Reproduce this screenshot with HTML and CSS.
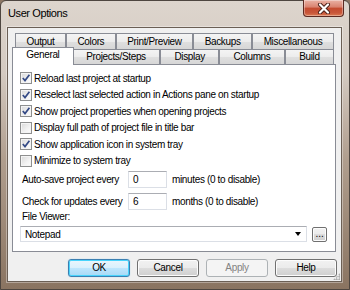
FILE: index.html
```html
<!DOCTYPE html>
<html lang="en">
<head>
    <meta charset="UTF-8">
    <title>User Options</title>
    <link rel="stylesheet" href="styles.css">
</head>
<body>

    <div class="window">
        <div class="titlebar">
            <span class="title">User Options</span>
            <div class="close">
                <svg width="14" height="11" viewBox="0 0 14 11">
                    <path d="M3 1.5 L11 9.5 M11 1.5 L3 9.5" stroke="#4a2018" stroke-width="4" stroke-linecap="round"/>
                    <path d="M3 1.5 L11 9.5 M11 1.5 L3 9.5" stroke="#fff" stroke-width="2.2" stroke-linecap="round"/>
                </svg>
            </div>
        </div>

        <div class="client">
            <div class="tabs">
                <div class="tab-row back">
                    <div class="tab">Output</div>
                    <div class="tab">Colors</div>
                    <div class="tab">Print/Preview</div>
                    <div class="tab">Backups</div>
                    <div class="tab">Miscellaneous</div>
                </div>
                <div class="tab-row front">
                    <div class="tab selected">General</div>
                    <div class="tab">Projects/Steps</div>
                    <div class="tab">Display</div>
                    <div class="tab">Columns</div>
                    <div class="tab">Build</div>
                </div>
            </div>

            <div class="panel">
                <div class="check"><span class="box checked"></span>Reload last project at startup</div>
                <div class="check"><span class="box checked"></span>Reselect last selected action in Actions pane on startup</div>
                <div class="check"><span class="box checked"></span>Show project properties when opening projects</div>
                <div class="check"><span class="box"></span>Display full path of project file in title bar</div>
                <div class="check"><span class="box checked"></span>Show application icon in system tray</div>
                <div class="check"><span class="box"></span>Minimize to system tray</div>

                <div class="field first">
                    <span class="field-label">Auto-save project every</span>
                    <div class="textbox">0</div>
                    <span class="unit">minutes (0 to disable)</span>
                </div>
                <div class="field">
                    <span class="field-label">Check for updates every</span>
                    <div class="textbox">6</div>
                    <span class="unit">months (0 to disable)</span>
                </div>

                <div class="viewer-label">File Viewer:</div>
                <div class="viewer-row">
                    <div class="combo">
                        <span>Notepad</span>
                        <span class="arrow"></span>
                    </div>
                    <div class="browse">...</div>
                </div>
            </div>

            <div class="buttons">
                <div class="btn default">OK</div>
                <div class="btn">Cancel</div>
                <div class="btn disabled">Apply</div>
                <div class="btn">Help</div>
            </div>

            <div class="grip"></div>
        </div>
    </div>

</body>
</html>
```

FILE: styles.css
```css
* {
    box-sizing: border-box;
}

body {
    margin: 0;
    font-family: "Liberation Sans", Arial, sans-serif;
    font-size: 10px;
    letter-spacing: -0.35px;
    color: #000;
    background-color: #8c7664;
}

.window {
    width: 350px;
    height: 290px;
    border: 1px solid #4e4640;
    border-radius: 6px 6px 0 0;
    background: linear-gradient(to bottom, #ddd5cd 0%, #d4cac1 25%, #b09e8e 55%, #8a7461 100%);
    padding: 0 7px 7px 6px;
    display: flex;
    flex-direction: column;
}

.titlebar {
    height: 26px;
    display: flex;
    justify-content: space-between;
    align-items: flex-start;
}

.title {
    font-size: 11px;
    letter-spacing: -0.4px;
    padding: 6px 0 0 1px;
}

.close {
    width: 41px;
    height: 17px;
    margin: -1px -2px 0 0;
    border: 1px solid #5c2a22;
    border-top: none;
    border-radius: 0 0 4px 4px;
    background: linear-gradient(to bottom, #eab2a4 0%, #d9826e 45%, #c44b2f 50%, #c8563a 80%, #dc7a52 100%);
    box-shadow: inset 0 0 0 1px rgba(255, 255, 255, 0.35);
    display: flex;
    align-items: center;
    justify-content: center;
}

.client {
    flex: 1;
    position: relative;
    background-color: #f0f0f0;
    border: 1px solid #6b5f55;
    box-shadow: 0 0 0 1px rgba(255, 255, 255, 0.35);
    padding: 5px 5px 4px 4px;
    display: flex;
    flex-direction: column;
}

.tabs {
    padding: 0 2px;
}

.tab-row {
    display: flex;
}

.tab-row.back {
    height: 16px;
    padding-left: 1px;
}

.tab-row.front {
    height: 15px;
}

.tab {
    flex: 1 1 auto;
    padding: 0 5px;
    text-align: center;
    white-space: nowrap;
    border: 1px solid #898c95;
    border-bottom: none;
    background: linear-gradient(to bottom, #f4f4f4 0%, #ececec 50%, #e0e0e0 50%, #d6d6d6 100%);
    line-height: 14px;
}

.back .tab {
    line-height: 15px;
}

.tab.selected {
    position: relative;
    z-index: 1;
    height: 18px;
    margin: -2px -2px -1px -2px;
    background: #fff;
    line-height: 14px;
}

.panel {
    background-color: #fff;
    border: 1px solid #898c95;
    padding: 5px 8px 9px 7px;
    display: flex;
    flex-direction: column;
}

.check {
    display: flex;
    align-items: center;
    height: 16.5px;
    white-space: nowrap;
}

.box {
    width: 12px;
    height: 12px;
    margin-right: 2px;
    border: 1px solid #8e8f8f;
    background: linear-gradient(135deg, #d8d8d8 0%, #f2f2f2 60%, #fdfdfd 100%);
    box-shadow: inset 0 0 0 1px #f4f4f4;
    flex-shrink: 0;
}

.box.checked {
    background-image: url("data:image/svg+xml;utf8,<svg xmlns='http://www.w3.org/2000/svg' width='10' height='10' viewBox='0 0 10 10'><path d='M1.8 5 L4 7.6 L8.4 1.8' fill='none' stroke='%23344a86' stroke-width='1.7'/></svg>"),
        linear-gradient(135deg, #d8d8d8 0%, #f2f2f2 60%, #fdfdfd 100%);
    background-repeat: no-repeat;
    background-position: center;
}

.field {
    display: flex;
    align-items: center;
    height: 17px;
    margin-top: 5px;
}

.field.first {
    margin-top: 2px;
}

.field-label {
    width: 108px;
    padding-left: 2px;
    white-space: nowrap;
}

.textbox {
    width: 39px;
    height: 17px;
    border: 1px solid #dbdfe6;
    border-top-color: #abadb3;
    padding-left: 4px;
    line-height: 15px;
}

.unit {
    margin-left: 5px;
}

.viewer-label {
    height: 14px;
    line-height: 14px;
    padding-left: 2px;
}

.viewer-row {
    display: flex;
    align-items: center;
    margin-top: 2px;
}

.combo {
    width: 289px;
    height: 16px;
    border: 1px solid #dbdfe6;
    border-top-color: #abadb3;
    display: flex;
    align-items: center;
    justify-content: space-between;
    padding: 0 5px 0 4px;
}

.arrow {
    width: 0;
    height: 0;
    border-left: 3.5px solid transparent;
    border-right: 3.5px solid transparent;
    border-top: 4px solid #000;
}

.browse {
    width: 15px;
    height: 15px;
    margin-left: 5px;
    border: 1px solid #707070;
    border-radius: 2px;
    background: linear-gradient(to bottom, #f2f2f2 0%, #ebebeb 50%, #dddddd 50%, #cfcfcf 100%);
    box-shadow: inset 0 0 0 1px #fcfcfc;
    text-align: center;
    line-height: 12px;
    letter-spacing: 0;
}

.buttons {
    display: flex;
    justify-content: flex-end;
    gap: 7px;
    margin-top: 7px;
    margin-right: -1px;
}

.btn {
    width: 62px;
    height: 18px;
    border: 1px solid #707070;
    border-radius: 3px;
    background: linear-gradient(to bottom, #f2f2f2 0%, #ebebeb 50%, #dddddd 50%, #cfcfcf 100%);
    box-shadow: inset 0 0 0 1px #fcfcfc;
    text-align: center;
    line-height: 16px;
}

.btn.default {
    border-color: #3c7fb1;
    background: linear-gradient(to bottom, #eaf6fd 0%, #d9f0fc 50%, #bee6fd 50%, #a7d9f5 100%);
    box-shadow: inset 0 0 0 1px #48d4fc, 0 0 1px #7ec4ea;
}

.btn.disabled {
    border-color: #adb2b5;
    background: #f4f4f4;
    box-shadow: none;
    color: #838383;
}

.grip {
    position: absolute;
    right: 1px;
    bottom: 1px;
    width: 7px;
    height: 7px;
    background-image: radial-gradient(circle, #a0a0a0 0.8px, transparent 1px);
    background-size: 2.5px 2.5px;
    clip-path: polygon(100% 0, 100% 100%, 0 100%);
}
```
